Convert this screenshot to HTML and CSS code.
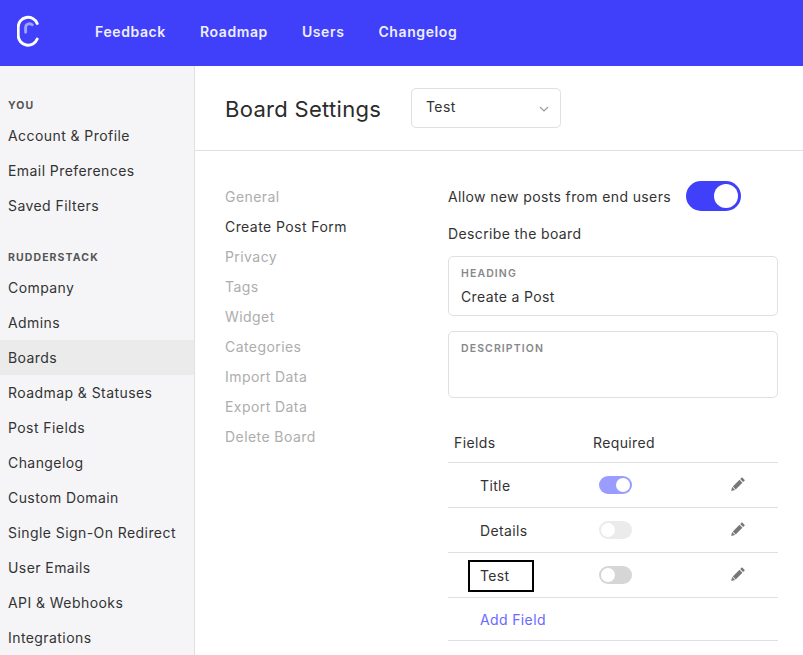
FILE: index.html
```html
<!DOCTYPE html>
<html lang="en">
<head>
<meta charset="utf-8">
<title>Board Settings</title>
<link rel="stylesheet" href="styles.css">
</head>
<body>
<div class="page">
  <header class="topbar">
    <svg class="logo" width="24" height="32" viewBox="0 0 24 32" fill="none">
      <path d="M20.2 8.5A9.85 9.85 0 0 0 1.2 12.15V20.55A9.85 9.85 0 0 0 20.2 24" stroke="#fff" stroke-width="2.9" stroke-linecap="round"/>
      <path d="M8.600 17.200V12.500A3.900 3.900 0 0 1 15.200 9.800" stroke="#a3a3ff" stroke-width="2.900" stroke-linecap="round"/>
    </svg>
    <nav class="topnav">
      <a>Feedback</a><a>Roadmap</a><a>Users</a><a>Changelog</a>
    </nav>
  </header>
  <div class="body">
    <aside class="sidebar">
      <div class="side-label">YOU</div>
      <a class="side-item">Account &amp; Profile</a>
      <a class="side-item">Email Preferences</a>
      <a class="side-item">Saved Filters</a>
      <div class="side-label side-label-2">RUDDERSTACK</div>
      <a class="side-item">Company</a>
      <a class="side-item">Admins</a>
      <a class="side-item active">Boards</a>
      <a class="side-item">Roadmap &amp; Statuses</a>
      <a class="side-item">Post Fields</a>
      <a class="side-item">Changelog</a>
      <a class="side-item">Custom Domain</a>
      <a class="side-item">Single Sign-On Redirect</a>
      <a class="side-item">User Emails</a>
      <a class="side-item">API &amp; Webhooks</a>
      <a class="side-item">Integrations</a>
    </aside>
    <main class="main">
      <div class="title-row">
        <h1 class="title">Board Settings</h1>
        <div class="select">
          <span>Test</span>
          <svg width="10" height="6" viewBox="0 0 10 6" fill="none"><path d="M1 1l4 4 4-4" stroke="#9a9a9a" stroke-width="1.2"/></svg>
        </div>
      </div>
      <div class="content">
        <nav class="subnav">
          <a>General</a>
          <a class="current">Create Post Form</a>
          <a>Privacy</a>
          <a>Tags</a>
          <a>Widget</a>
          <a>Categories</a>
          <a>Import Data</a>
          <a>Export Data</a>
          <a>Delete Board</a>
        </nav>
        <section class="form">
          <div class="allow">
            <span>Allow new posts from end users</span>
            <span class="toggle big"><i></i></span>
          </div>
          <div class="describe">Describe the board</div>
          <div class="box heading-box">
            <div class="box-label">HEADING</div>
            <div class="box-value">Create a Post</div>
          </div>
          <div class="box desc-box">
            <div class="box-label">DESCRIPTION</div>
          </div>
          <div class="fields-head">
            <span class="col-name">Fields</span>
            <span class="col-req">Required</span>
          </div>
          <div class="field">
            <span class="field-name">Title</span>
            <span class="toggle small on"><i></i></span>
            <svg class="pencil" width="14" height="14" viewBox="0 0 14 14"><path d="M11 .3l2.900 2.900-1.800 1.800-2.900-2.900zM8.500 2.800l2.900 2.900-6.700 6.700-2.900-2.900zM1.100 10l3 3-3.900.9z" fill="#777"/></svg>
          </div>
          <div class="field">
            <span class="field-name">Details</span>
            <span class="toggle small off-light"><i></i></span>
            <svg class="pencil" width="14" height="14" viewBox="0 0 14 14"><path d="M11 .3l2.900 2.900-1.800 1.800-2.900-2.900zM8.500 2.800l2.900 2.900-6.700 6.700-2.900-2.900zM1.100 10l3 3-3.900.9z" fill="#777"/></svg>
          </div>
          <div class="field">
            <span class="field-name outlined">Test</span>
            <span class="toggle small off"><i></i></span>
            <svg class="pencil" width="14" height="14" viewBox="0 0 14 14"><path d="M11 .3l2.900 2.900-1.800 1.800-2.900-2.900zM8.500 2.800l2.900 2.900-6.700 6.700-2.900-2.900zM1.100 10l3 3-3.900.9z" fill="#777"/></svg>
          </div>
          <div class="add-row"><a>Add Field</a></div>
        </section>
      </div>
    </main>
  </div>
</div>
</body>
</html>
```
FILE: styles.css
```css
* { box-sizing: border-box; }
html, body { margin: 0; height: 100%; overflow: hidden; }
body { font-family: Inter, "Liberation Sans", sans-serif; font-size: 14px; letter-spacing: 0.43px; color: #333; background: #fff; }
.page { height: 655px; display: flex; flex-direction: column; overflow: hidden; }
.topbar { height: 66px; flex: none; background: #4040fb; display: flex; align-items: center; padding-left: 17px; }
.logo { display: block; margin-top: -4px; }
.topnav { display: flex; gap: 34px; margin-left: 54px; margin-top: -3px; }
.topnav a { color: #eeeeff; font-weight: 600; font-size: 14px; letter-spacing: 0.6px; }
.body { flex: 1; display: flex; min-height: 0; }
.sidebar { width: 195px; flex: none; background: #f5f5f7; border-right: 1px solid #e0e0e0; padding-top: 33px; overflow: hidden; }
.side-label { height: 19px; line-height: 14px; padding-left: 8px; font-size: 10.5px; font-weight: 700; letter-spacing: 1.1px; color: #555; }
.side-label-2 { margin-top: 28px; height: 19px; }
.side-item { display: block; height: 35px; line-height: 35px; padding-left: 8px; font-size: 14px; color: #333; white-space: nowrap; }
.side-item.active { background: #ebebeb; }
.main { flex: 1; min-width: 0; }
.title-row { height: 85px; border-bottom: 1px solid #e0e0e0; display: flex; align-items: flex-start; padding: 22px 0 0 30px; }
.title { margin: 8px 0 0; font-size: 22px; font-weight: 400; line-height: 26px; letter-spacing: 0.3px; color: #2b2b2b; width: 186px; white-space: nowrap; }
.select { width: 150px; height: 40px; border: 1px solid #e0e0e0; border-radius: 5px; display: flex; align-items: center; justify-content: space-between; padding: 0 11px 0 14px; }
.select span { margin-bottom: 4px; }
.select svg { margin-top: 2px; }
.content { display: flex; padding: 30px 25px 0 30px; }
.subnav { width: 223px; flex: none; display: flex; flex-direction: column; margin-top: 1px; }
.subnav a { height: 30px; line-height: 30px; color: #adadad; font-size: 14px; }
.subnav a.current { color: #333; }
.form { width: 330px; flex: none; letter-spacing: 0.37px; }
.allow { display: flex; align-items: center; height: 30px; gap: 15px; }
.toggle { display: inline-flex; align-items: center; border-radius: 20px; flex: none; }
.toggle i { display: block; border-radius: 50%; background: #fff; }
.toggle.big { width: 55px; height: 30px; background: #4040fb; justify-content: flex-end; padding: 3px; }
.toggle.big i { width: 24px; height: 24px; }
.toggle.small { width: 33px; height: 18px; padding: 2px; }
.toggle.small i { width: 14px; height: 14px; }
.toggle.on { background: #9a9cff; justify-content: flex-end; }
.toggle.off-light { background: #ebebeb; }
.toggle.off { background: #d6d6d6; }
.describe { margin-top: 11px; height: 23px; line-height: 23px; }
.box { border: 1px solid #e0e0e0; border-radius: 5px; padding: 11px 12px 0; }
.heading-box { margin-top: 11px; height: 60px; }
.desc-box { margin-top: 15px; height: 67px; }
.box-label { font-size: 10.5px; font-weight: 600; letter-spacing: 1.1px; color: #888; line-height: 12px; }
.box-value { margin-top: 7px; line-height: 20px; }
.fields-head { margin-top: 24px; height: 41px; display: flex; align-items: center; border-bottom: 1px solid #e0e0e0; padding: 0 0 0 6px; }
.col-name { width: 139px; }
.field { height: 45px; display: flex; align-items: center; border-bottom: 1px solid #e0e0e0; }
.field-name { width: 151px; padding-left: 32px; }
.field-name.outlined { border: 2px solid #000; margin: 1px 65px 0 20px; padding-left: 10px; width: 66px; height: 32px; line-height: 28px; }
.field .toggle { margin-top: -1px; }
.pencil { margin-left: 99px; margin-top: -3px; }
.add-row { height: 43px; display: flex; align-items: center; padding-left: 32px; border-bottom: 1px solid #e0e0e0; }
.add-row a { color: #6a6aff; }
```
